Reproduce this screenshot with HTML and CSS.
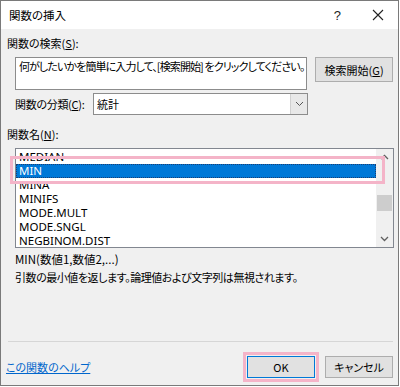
FILE: index.html
```html
<!DOCTYPE html>
<html lang="ja">
<head>
<meta charset="utf-8">
<link rel="stylesheet" href="styles.css">
</head>
<body>
<div class="window">
  <div class="titlebar">
    <span class="title">関数の挿入</span>
    <span class="help">?</span>
    <svg class="close" width="12" height="12" viewBox="0 0 12 12"><path d="M1 1 L11 11 M11 1 L1 11" stroke="#222" stroke-width="1.1" fill="none"/></svg>
  </div>
  <div class="content">
    <div class="label first">関数の検索(<u>S</u>):</div>
    <div class="search-row">
      <div class="textarea">何がしたいかを簡単に入力して、[検索開始] をクリックしてください。</div>
      <div class="btn search-btn">検索開始(<u>G</u>)</div>
    </div>
    <div class="cat-row">
      <span class="cat-label">関数の分類(<u>C</u>):</span>
      <div class="select">
        <span class="select-text">統計</span>
        <span class="select-arrow"><svg width="9" height="6" viewBox="0 0 9 6"><path d="M1 1 L4.5 4.5 L8 1" stroke="#555" stroke-width="1" fill="none"/></svg></span>
      </div>
    </div>
    <div class="label names">関数名(<u>N</u>):</div>
    <div class="listbox">
      <div class="items">
        <div class="item">MEDIAN</div>
        <div class="item selected">MIN</div>
        <div class="item">MINA</div>
        <div class="item">MINIFS</div>
        <div class="item">MODE.MULT</div>
        <div class="item">MODE.SNGL</div>
        <div class="item">NEGBINOM.DIST</div>
      </div>
      <div class="scrollbar">
        <svg class="arrow" width="9" height="6" viewBox="0 0 9 6"><path d="M1 5 L4.5 1.5 L8 5" stroke="#606060" stroke-width="1.3" fill="none"/></svg>
        <div class="track"><div class="thumb"></div></div>
        <svg class="arrow" width="9" height="6" viewBox="0 0 9 6"><path d="M1 1 L4.5 4.5 L8 1" stroke="#606060" stroke-width="1.3" fill="none"/></svg>
      </div>
      <div class="highlight"></div>
    </div>
    <div class="syntax">MIN(数値1,数値2,...)</div>
    <div class="desc">引数の最小値を返します。論理値および文字列は無視されます。</div>
    <div class="separator"></div>
    <div class="bottom-row">
      <a class="help-link" href="#">この関数のヘルプ</a>
      <div class="btn ok">OK</div>
      <div class="btn cancel">キャンセル</div>
    </div>
  </div>
</div>
</body>
</html>
```
FILE: styles.css
```css
html, body {
  margin: 0;
  padding: 0;
  background: #ffffff;
}
body {
  font-family: "Noto Sans CJK JP", "Noto Sans", sans-serif;
  font-size: 11px;
  color: #000;
  font-feature-settings: "palt";
}
u { text-decoration: underline; text-underline-offset: 1px; }
.window {
  box-sizing: border-box;
  width: 399px;
  height: 386px;
  border: 1px solid #7a7a7a;
  background: #f0f0f0;
  display: flex;
  flex-direction: column;
}
.titlebar {
  height: 28px;
  background: #ffffff;
  display: flex;
  align-items: center;
  flex: none;
}
.title {
  margin-left: 8px;
  flex: 1;
  line-height: 16px;
  font-size: 11.5px;
}
.help {
  font-family: "Liberation Sans", sans-serif;
  font-size: 13px;
  margin-right: 31px;
  color: #222;
}
.close { margin-right: 14px; }
.content {
  flex: 1;
  display: flex;
  flex-direction: column;
  padding: 0 5px 7px 6px;
}
.label { line-height: 16px; height: 16px; white-space: nowrap; }
.label.first { margin-top: 6px; }
.search-row {
  display: flex;
  align-items: flex-start;
  margin-top: 6px;
}
.textarea {
  box-sizing: border-box;
  margin-left: 8px;
  width: 293px;
  height: 33px;
  background: #fff;
  border: 1px solid #8c8c8c;
  padding: 0 3px;
  line-height: 16px;
  white-space: nowrap;
  overflow: hidden;
  letter-spacing: -0.9px;
}
.btn {
  box-sizing: border-box;
  background: #e1e1e1;
  border: 1px solid #adadad;
  display: flex;
  align-items: center;
  justify-content: center;
  white-space: nowrap;
}
.search-btn {
  margin-left: 8px;
  width: 78px;
  height: 25px;
}
.cat-row {
  display: flex;
  align-items: center;
  margin-top: 3px;
}
.cat-label {
  margin-left: 8px;
  width: 78px;
  white-space: nowrap;
  letter-spacing: -0.3px;
}
.select {
  box-sizing: border-box;
  width: 215px;
  height: 22px;
  background: #fff;
  border: 1px solid #8c8c8c;
  display: flex;
  align-items: center;
}
.select-text { flex: 1; padding-left: 3px; }
.select-arrow {
  width: 16px;
  height: 20px;
  background: #e8e8e8;
  border-left: 1px solid #d0d0d0;
  display: flex;
  align-items: center;
  justify-content: center;
}
.label.names { margin-top: 11px; }
.listbox {
  position: relative;
  box-sizing: border-box;
  margin-top: 6px;
  margin-left: 8px;
  width: 379px;
  height: 100px;
  background: #fff;
  border: 1px solid #828790;
  display: flex;
  overflow: visible;
}
.items {
  flex: 1;
  padding-top: 1px;
  overflow: hidden;
  font-family: "Noto Sans", sans-serif;
  font-size: 11.5px;
}
.item {
  height: 14px;
  line-height: 14px;
  padding-left: 3px;
  white-space: nowrap;
}
.item.selected {
  background: #0078d7;
  color: #fff;
  outline: 1px dotted #1c3f73;
  outline-offset: -1px;
}
.scrollbar {
  width: 17px;
  background: #f0f0f0;
  display: flex;
  flex-direction: column;
  align-items: center;
}
.scrollbar .arrow { margin: 5px 0; flex: none; }
.track { flex: 1; width: 100%; }
.thumb {
  margin: 30px 1px 0 1px;
  height: 16px;
  background: #cdcdcd;
}
.highlight {
  position: absolute;
  left: -6px;
  top: 7px;
  width: 375px;
  height: 28px;
  box-sizing: border-box;
  border: 3px solid #f4b4c8;
  pointer-events: none;
}
.syntax {
  margin-top: 3px;
  margin-left: 8px;
  line-height: 16px;
  font-size: 11.5px;
}
.desc {
  margin-top: 2px;
  margin-left: 8px;
  line-height: 16px;
  white-space: nowrap;
  letter-spacing: -0.45px;
}
.separator {
  margin-top: auto;
  height: 1px;
  background: #d6d6d6;
  margin-left: 1px;
}
.bottom-row {
  display: flex;
  align-items: center;
  margin-top: 14px;
}
.help-link {
  flex: 1;
  color: #0066cc;
  text-decoration: underline;
  margin-left: -1px;
}
.ok {
  width: 68px;
  height: 22px;
  border: 1px solid #0078d7;
  outline: 3px solid #f4b4c8;
  outline-offset: 1px;
}
.cancel {
  margin-left: 10px;
  width: 68px;
  height: 22px;
}
```
